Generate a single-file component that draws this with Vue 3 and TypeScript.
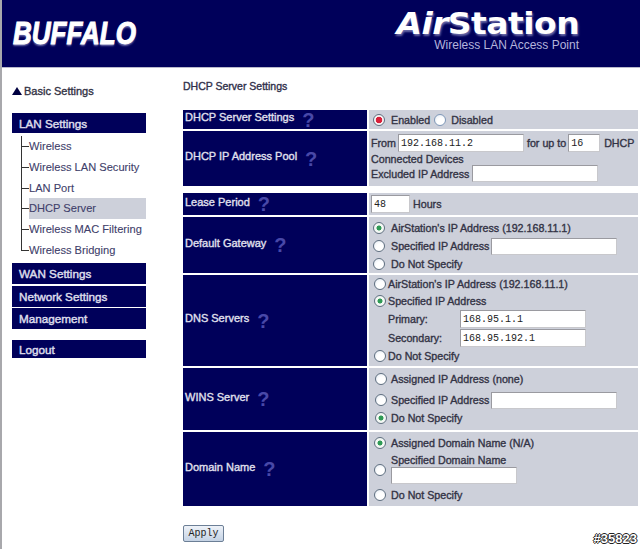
<template>
  <div class="page">
    <header class="banner">
      <div class="buffalo">BUFFALO</div>
      <div class="product">
        <div class="airstation"><i>Air</i>Station</div>
        <div class="tagline">Wireless LAN Access Point</div>
      </div>
    </header>

    <div class="body">
      <aside class="side">
        <div class="basic"><span class="tri"></span>Basic Settings</div>
        <div class="menu first">LAN Settings</div>
        <ul class="tree">
          <li v-for="item in lanItems" :key="item" :class="{ current: item === 'DHCP Server' }">
            <span>{{ item }}</span>
          </li>
        </ul>
        <div class="menu wan">WAN Settings</div>
        <div class="menu">Network Settings</div>
        <div class="menu">Management</div>
        <div class="menu logout">Logout</div>
      </aside>

      <main class="main">
        <h1 class="title">DHCP Server Settings</h1>

        <div class="table">
          <div class="label r1"><span>DHCP Server Settings</span><b class="q">?</b></div>
          <div class="value r1 inline">
            <input class="radio red" type="radio" checked />
            <span class="enabled">Enabled</span>
            <input class="radio off" type="radio" />
            <span>Disabled</span>
          </div>

          <div class="label r2"><span>DHCP IP Address Pool</span><b class="q">?</b></div>
          <div class="value r2 pool">
            <div class="line l-from">
              From<input class="field from" value="192.168.11.2" />for up to<input class="field count" value="16" />DHCP
            </div>
            <div class="line l-conn">Connected Devices</div>
            <div class="line">Excluded IP Address<input class="field excl" /></div>
          </div>

          <div class="label r3 spaced"><span>Lease Period</span><b class="q">?</b></div>
          <div class="value r3 spaced lease"><input class="field hours" value="48" />Hours</div>

          <div class="label r4"><span>Default Gateway</span><b class="q">?</b></div>
          <div class="value r4 opts gateway">
            <label class="opt"><input class="radio" type="radio" checked />AirStation's IP Address (192.168.11.1)</label>
            <label class="opt"><input class="radio" type="radio" />Specified IP Address<input class="field addr" /></label>
            <label class="opt"><input class="radio" type="radio" />Do Not Specify</label>
          </div>

          <div class="label r5"><span>DNS Servers</span><b class="q">?</b></div>
          <div class="value r5 opts dns">
            <label class="opt"><input class="radio" type="radio" />AirStation's IP Address (192.168.11.1)</label>
            <label class="opt"><input class="radio" type="radio" checked />Specified IP Address</label>
            <div class="server"><span>Primary:</span><input class="field dnsf" value="168.95.1.1" /></div>
            <div class="server"><span>Secondary:</span><input class="field dnsf" value="168.95.192.1" /></div>
            <label class="opt"><input class="radio" type="radio" />Do Not Specify</label>
          </div>

          <div class="label r6"><span>WINS Server</span><b class="q">?</b></div>
          <div class="value r6 opts wins">
            <label class="opt"><input class="radio" type="radio" />Assigned IP Address (none)</label>
            <label class="opt mid"><input class="radio" type="radio" />Specified IP Address<input class="field addr" /></label>
            <label class="opt"><input class="radio" type="radio" checked />Do Not Specify</label>
          </div>

          <div class="label r7"><span>Domain Name</span><b class="q">?</b></div>
          <div class="value r7 opts domain">
            <label class="opt"><input class="radio" type="radio" checked />Assigned Domain Name (N/A)</label>
            <div class="tall">
              <input class="radio" type="radio" />
              <div class="stack"><span>Specified Domain Name</span><input class="field addr nomargin" /></div>
            </div>
            <label class="opt"><input class="radio" type="radio" />Do Not Specify</label>
          </div>
        </div>

        <button class="apply" type="button">Apply</button>
      </main>
    </div>

    <div class="stamp">#35823</div>
  </div>
</template>

<script setup lang="ts">
const lanItems: string[] = [
  'Wireless',
  'Wireless LAN Security',
  'LAN Port',
  'DHCP Server',
  'Wireless MAC Filtering',
  'Wireless Bridging',
];
</script>

<style>
html,
body {
  margin: 0;
  background: #fff;
}
</style>

<style scoped>
.page {
  position: relative;
  width: 640px;
  height: 549px;
  overflow: hidden;
  box-sizing: border-box;
  border-left: 2px solid #a8a8ac;
  font-family: 'Liberation Sans', Arial, sans-serif;
  font-size: 10.7px;
  font-weight: normal;
  -webkit-text-stroke: 0.35px currentColor;
  color: #333345;
}

.banner {
  height: 67px;
  background: #00005a;
  border-bottom: 1px solid #b9b9cc;
  display: flex;
  justify-content: space-between;
  box-sizing: content-box;
}
.buffalo {
  margin: 20px 0 0 11px;
  font-size: 31px;
  line-height: 28px;
  font-style: italic;
  font-weight: bold;
  color: #fff;
  -webkit-text-stroke: 1px #fff;
  transform: scaleX(0.84);
  transform-origin: left center;
  text-shadow: 0 2px 2px #6a6aa8;
}
.product {
  margin-right: 61px;
  padding-top: 9px;
  text-align: right;
  white-space: nowrap;
}
.airstation {
  font-family: 'DejaVu Sans', sans-serif;
  font-size: 30px;
  font-weight: bold;
  letter-spacing: -0.5px;
  line-height: 29px;
  color: #fff;
  -webkit-text-stroke: 0;
  text-shadow: 1px 2px 2px #6a6aa8;
  transform: scaleX(1.1);
  transform-origin: right center;
}
.tagline {
  font-size: 12px;
  line-height: 14px;
  -webkit-text-stroke: 0;
  color: #b4b4dc;
}

.body {
  display: flex;
}
.side {
  flex: none;
  width: 134px;
  padding-left: 10px;
  box-sizing: content-box;
}
.basic {
  height: 14px;
  margin-top: 16px;
  display: flex;
  align-items: center;
  line-height: 14px;
  font-size: 11px;
}
.tri {
  width: 0;
  height: 0;
  margin-right: 2px;
  border-left: 5px solid transparent;
  border-right: 5px solid transparent;
  border-bottom: 8px solid #000040;
}
.menu {
  height: 21px;
  margin-bottom: 1px;
  padding-left: 7px;
  background: #00005a;
  color: #dcdcea;
  font-size: 11.7px;
  line-height: 22px;
  -webkit-text-stroke: 0.45px currentColor;
}
.menu.first {
  height: 20px;
  line-height: 21px;
  margin-top: 15px;
  margin-bottom: 3px;
}
.menu.wan {
  margin-bottom: 2px;
}
.menu.logout {
  height: 18px;
  line-height: 20px;
  margin-top: 11px;
}
.tree {
  list-style: none;
  margin: 0;
  padding: 0 0 0 9px;
  font-size: 11.1px;
  white-space: nowrap;
  color: #40406a;
  -webkit-text-stroke: 0.1px currentColor;
}
.tree li {
  position: relative;
  height: 20.8px;
  padding-left: 7px;
  line-height: 20.8px;
  border-left: 1px solid #333;
}
.tree li:last-child {
  height: 11px;
  margin-bottom: 12px;
}
.tree li::before {
  content: '';
  position: absolute;
  left: 0;
  top: 10px;
  width: 7px;
  height: 1px;
  background: #333;
}
.tree li:last-child span {
  position: absolute;
  top: 0;
}
.tree li.current span {
  display: block;
  background: #cdd0da;
}

.main {
  padding-left: 37px;
  flex: 1;
}
.title {
  margin: 12px 0 0;
  height: 13px;
  font-size: 10.5px;
  line-height: 13px;
  font-weight: normal;
  color: #30304a;
}
.table {
  margin-top: 17px;
  display: grid;
  grid-template-columns: 184px 269px;
  column-gap: 2px;
  row-gap: 2px;
}
.label {
  display: flex;
  align-items: center;
  padding-left: 2px;
  background: #00005a;
  color: #e0e0ee;
  font-size: 11px;
}
.label span {
  margin-bottom: 5px;
}
.value {
  background: #cdd0da;
  min-width: 0;
}
.q {
  margin-left: 8px;
  font-size: 20px;
  line-height: 18px;
  color: #4848a8;
  -webkit-text-stroke: 0;
}
.r1 { height: 19px; }
.r2 { height: 55px; }
.r3 { height: 22px; }
.r4 { height: 56px; }
.r5 { height: 91px; }
.r6 { height: 62px; }
.r7 { height: 74px; }
.spaced { margin-top: 5px; }

.inline {
  display: flex;
  align-items: center;
  padding-left: 4px;
}
.enabled {
  margin-right: 4px;
}
.radio.off {
  margin-right: 5px;
  border-color: #7f98b8;
}

.radio {
  appearance: none;
  width: 12px;
  height: 12px;
  margin: 0 6px 0 0;
  flex: none;
  border: 1px solid #5f6f80;
  border-radius: 50%;
  background: radial-gradient(circle at 60% 65%, #ffffff 40%, #dfe6f0 100%);
  box-sizing: border-box;
}
.radio:checked {
  background: radial-gradient(circle, #2f9a55 0 2.2px, #f4f8f4 2.8px);
}
.radio.red:checked {
  background: radial-gradient(circle, #d8203a 0 3px, #f8f4f4 3.6px);
}

.field {
  box-sizing: border-box;
  height: 18px;
  padding: 0 2px;
  border: 1px solid #9a9aa0;
  border-right-color: #c8c8cc;
  border-bottom-color: #c8c8cc;
  background: #fff;
  font-family: 'Liberation Mono', monospace;
  font-size: 10px;
  color: #222;
  -webkit-text-stroke: 0;
  outline: none;
  border-radius: 0;
}

.pool {
  padding-left: 2px;
  box-sizing: border-box;
}
.line {
  display: flex;
  align-items: center;
  height: 17px;
  white-space: nowrap;
}
.l-from {
  height: 18px;
  margin-top: 3px;
}
.l-conn {
  height: 13px;
}
.from {
  width: 126px;
  margin: 0 3px 0 2px;
}
.count {
  width: 32px;
  margin: 0 4px 0 2px;
}
.excl {
  width: 126px;
  margin-left: 3px;
  height: 17px;
}
.lease {
  display: flex;
  align-items: center;
  padding-left: 2px;
}
.hours {
  width: 39px;
  margin-right: 3px;
}

.opts {
  display: flex;
  flex-direction: column;
  padding-left: 4px;
  padding-top: 2px;
  box-sizing: border-box;
}
.opt {
  display: flex;
  align-items: center;
  height: 18px;
  white-space: nowrap;
}
.addr {
  width: 126px;
  height: 17px;
  margin-left: 2px;
}
.nomargin {
  display: block;
  margin: 0;
}
.dns {
  padding: 0 0 0 5px;
}
.dns .opt {
  height: 17px;
}
.dns .radio {
  margin-right: 2px;
}
.dns .server:nth-child(3) {
  margin-top: 1px;
}
.server {
  display: flex;
  align-items: center;
  height: 18px;
  padding-left: 14px;
}
.server + .server {
  margin-top: 1px;
}
.server span {
  width: 72px;
}
.dnsf {
  width: 126px;
}
.wins {
  padding-left: 6px;
}
.wins .radio {
  margin-right: 4px;
}
.mid {
  margin-top: 3px;
}
.domain {
  padding-left: 5px;
}
.domain .radio {
  margin-right: 5px;
}
.tall {
  display: flex;
  margin-top: 1px;
  margin-bottom: 2px;
}
.tall .radio {
  margin-top: 11px;
}
.stack {
  display: flex;
  flex-direction: column;
}
.stack span {
  height: 14px;
  line-height: 14px;
}

.apply {
  display: block;
  margin-top: 19px;
  width: 41px;
  height: 17px;
  padding: 0;
  border: 1px solid #6c7f96;
  border-radius: 2px;
  background: linear-gradient(#eef2f8, #c4d2e4);
  font-family: 'Liberation Mono', monospace;
  font-size: 10px;
  color: #222;
  -webkit-text-stroke: 0;
}

.stamp {
  position: absolute;
  right: 3px;
  bottom: 3px;
  font-size: 13px;
  line-height: 14px;
  font-weight: bold;
  color: #fff;
  -webkit-text-stroke: 0;
  text-shadow: 1px 0 0 #222, -1px 0 0 #222, 0 1px 0 #222, 0 -1px 0 #222;
}
</style>
